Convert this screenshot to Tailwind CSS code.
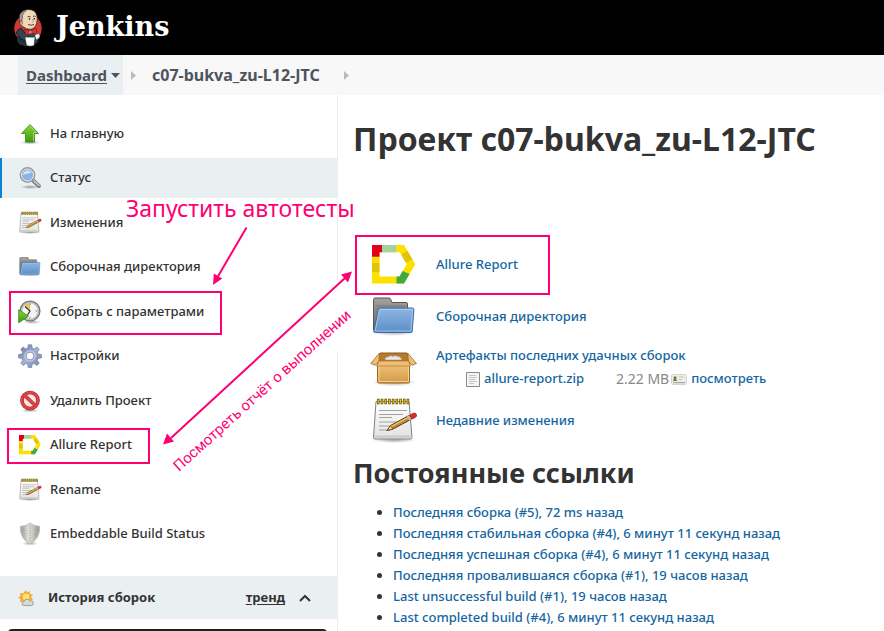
<!DOCTYPE html>
<html lang="ru">
<head>
<meta charset="utf-8">
<title>c07-bukva_zu-L12-JTC [Jenkins]</title>
<script src="https://cdn.jsdelivr.net/npm/@tailwindcss/browser@4"></script>
</head>
<body class="bg-white">
<!-- Shared icon definitions -->
<svg class="absolute size-0" aria-hidden="true">
  <defs>
    <linearGradient id="green" x1="0" y1="0" x2="0" y2="1"><stop offset="0" stop-color="#8fd63a"/><stop offset="1" stop-color="#3d9a0c"/></linearGradient>
    <linearGradient id="blue" x1="0" y1="0" x2="0" y2="1"><stop offset="0" stop-color="#8fb6e2"/><stop offset="1" stop-color="#5b8dc8"/></linearGradient>
    <linearGradient id="grey" x1="0" y1="0" x2="0" y2="1"><stop offset="0" stop-color="#a2a2a0"/><stop offset="1" stop-color="#666"/></linearGradient>
    <linearGradient id="paper" x1="0" y1="0" x2="0" y2="1"><stop offset="0" stop-color="#ffffff"/><stop offset="1" stop-color="#e2e2e0"/></linearGradient>
    <linearGradient id="gearfill" x1="0" y1="0" x2="1" y2="1"><stop offset="0" stop-color="#62779f"/><stop offset=".5" stop-color="#a7b1d3"/><stop offset="1" stop-color="#777fa6"/></linearGradient>
    <linearGradient id="shieldfill" x1="0" y1="0" x2="1" y2="0"><stop offset="0" stop-color="#9b9b96"/><stop offset=".45" stop-color="#e4e4df"/><stop offset="1" stop-color="#95958f"/></linearGradient>
    <linearGradient id="carton" x1="0" y1="0" x2="0" y2="1"><stop offset="0" stop-color="#f1c883"/><stop offset="1" stop-color="#d59a45"/></linearGradient>
    <radialGradient id="shade"><stop offset="0" stop-color="#000" stop-opacity=".35"/><stop offset="1" stop-color="#000" stop-opacity="0"/></radialGradient>
    <symbol id="i-folder" viewBox="0 0 48 48">
      <ellipse cx="24" cy="39" rx="23" ry="4" fill="url(#shade)"/>
      <path d="M3.500 37V6.500q0-1.500 1.500-1.500h14q1.200 0 1.700 1.300l1.300 3.200h14q1.500 0 1.500 1.500V37z" fill="url(#grey)" stroke="#565656"/>
      <path d="M5.500 13h30M5.500 16h30M5.500 19h30" stroke="#777" stroke-width="1"/>
      <path d="M8.500 16.500q.1-1.500 1.500-1.500h32.500q1.500 0 1.400 1.500l-1.700 21.500q-.1 1.500-1.500 1.500H5.200q-1.500 0-1.400-1.500z" fill="url(#blue)" stroke="#3a6ba8"/>
      <path d="M9.500 16.500h33l-1.600 21.500H5.200z" fill="none" stroke="#b4cfee" stroke-width=".8"/>
    </symbol>
    <symbol id="i-notepad" viewBox="0 0 48 48">
      <ellipse cx="24" cy="43" rx="22" ry="3" fill="url(#shade)"/>
      <path d="M6 4.500h33l3 36q0 1.500-1.500 1.500H5Q3.500 42 3.500 40.500z" fill="url(#paper)" stroke="#808080"/>
      <path d="M4.500 39.500h37" stroke="#c8c8c4" stroke-width="2"/>
      <path d="M9 13.500h28M9 17.500h24M9 20.500h13M9 25h28M9 29h20M9 33h11" stroke="#a2a2a2" stroke-width="1.200"/>
      <path d="M7 4.500h33" stroke="#655000" stroke-width="5.600" stroke-dasharray="2.600 1.100"/>
      <path d="M7.700 4.500h33" stroke="#e5c52b" stroke-width="4" stroke-dasharray="1.200 2.500"/>
      <path d="M17 33.500l3.500-5L39 18.500l2.500 3.500L23 32z" fill="#c98b2e" stroke="#5b3c0d"/>
      <path d="M21 29.500l18-9.500" stroke="#f0c878" stroke-width="1.300"/>
      <path d="M17 33.500l3.500-5L23 32z" fill="#ead2a4" stroke="#5b3c0d" stroke-width=".7"/>
      <path d="M37 19.500l2.500-1.400 2.300 4-2.500 1.400z" fill="#bbb"/>
      <path d="M39.500 18.200l4-2q2-.4 2.900 1.200.8 1.800-1 2.900l-3.500 1.900z" fill="#e02c2c" stroke="#9b1111" stroke-width=".7"/>
    </symbol>
    <symbol id="i-allure" viewBox="0 0 48 48">
      <path fill-rule="evenodd" d="M2 4h32l11.300 19.200L34 42.500H2zM9.500 11.300v24.200H29.500l7.300-12.300-7-11.900z" fill="#fde000"/>
      <path d="M2 4h10v7.300H9.500v4.500H2z" fill="#e3001b"/>
      <path d="M12 4h14v7.300H12z" fill="#a4d3a2"/>
      <path d="M2 22h7.500v9H2z" fill="#e0c40c"/>
      <path d="M37.500 10l5 8.500-6.500 3.300-4.800-8z" fill="#e0c40c"/>
      <path d="M26.500 35.500h3l3.200-5.400 6.800 3L34 42.500h-7.500z" fill="#3fab3f"/>
    </symbol>
  </defs>
</svg>

<div class="relative h-screen overflow-hidden bg-white font-['Noto_Sans','Open_Sans',sans-serif] text-[#333]">
  <header class="flex h-[55px] items-center bg-black pl-[13px]">
    <a href="#" class="flex items-center gap-[13px] text-white">
      <svg class="h-[40px] w-[30px]" viewBox="0 0 30 40" aria-hidden="true">
        <ellipse cx="15" cy="20.500" rx="13.700" ry="14" fill="#d33833"/>
        <path d="M4.500 28q-1.500 6 2 8.500l5 1.500h9l5-4-3-9-5-4z" fill="#22323f"/>
        <path d="M3 25q2-4 5-5l4 5 9-1 5 5-2 6-4 1-8-3-4-2z" fill="#2f4552" stroke="#0c1216" stroke-width=".8"/>
        <path d="M7 17V10Q7 2 14.500 1.500 22.500 1 24 8q.5 3-.3 6.500-1 6-6 6.800-4.700.2-7.200-2.500z" fill="#f1d6b9" stroke="#231f20" stroke-width=".7"/>
        <path d="M6.800 14Q4.600 6 10 3l4-1.500Q8.500 6 9.500 9.500L8.800 13z" fill="#a39a8d" stroke="#231f20" stroke-width=".5"/>
        <path d="M7.500 13q2-1 2 1.500t-1.500 3" fill="#e4bd98" stroke="#231f20" stroke-width=".5"/>
        <path d="M14.500 9q1.500-1.300 3 0M20 8.500q1.200-1 2.600 0M15 16.500q3 1.500 6 0" fill="none" stroke="#231f20" stroke-width=".8"/>
        <circle cx="16.500" cy="11" r=".8"/><circle cx="21.300" cy="10.800" r=".8"/>
        <path d="M19.500 11q2 2.500 0 3.500" fill="none" stroke="#a77b58" stroke-width=".8"/>
        <path d="M11 21l6 2.500 6-3.300 1 6-6-1.200-5 2z" fill="#d33833" stroke="#7a1412" stroke-width=".6"/>
        <path d="M16 22.500h2.600v3.200H16z" fill="#ef6a62"/>
        <path d="M12 29h10l-1 8.500q-4 1.500-7.500 0z" fill="#fff" stroke="#222" stroke-width=".5"/>
        <path d="M21.500 27q5-3 5.500.5.500 3-4 4.500z" fill="#eee" stroke="#222" stroke-width=".6"/>
        <path d="M12.500 29.500h9" stroke="#aaa"/>
      </svg>
      <span class="pb-0.5 font-['DejaVu_Serif',serif] text-[27px] leading-8 font-bold">Jenkins</span>
    </a>
  </header>

  <nav aria-label="Breadcrumb" class="flex h-10 items-center bg-[#f8f8f8] pl-[18px] text-[15px] font-bold text-[#4d545d]">
    <a href="#" class="flex h-10 items-center gap-1 bg-[#eaeff2] pr-[3px] pl-2"><span class="underline underline-offset-2">Dashboard</span>
      <svg class="h-[5px] w-[9px]" viewBox="0 0 9 5" aria-hidden="true"><path d="M0 0h9L4.500 5z" fill="#4d545d"/></svg></a>
    <svg class="ml-2 h-[9px] w-[5px]" viewBox="0 0 5 9" aria-hidden="true"><path d="M0 0l5 4.500L0 9z" fill="#bbb"/></svg>
    <a href="#" class="mr-6 ml-4 text-base">c07-bukva_zu-L12-JTC</a>
    <svg class="h-[9px] w-[5px]" viewBox="0 0 5 9" aria-hidden="true"><path d="M0 0l5 4.500L0 9z" fill="#bbb"/></svg>
  </nav>

  <div class="flex">
    <aside class="w-[338px] shrink-0 border-r border-[#eaeff2] pt-[14px]">
      <ul class="text-[13px] font-medium">
        <li class="odd:mt-[5px] even:mt-1"><a href="#" class="flex h-10 items-center gap-2 pl-[18px]">
          <svg class="size-6" viewBox="0 0 24 24" aria-hidden="true"><ellipse cx="12" cy="20.500" rx="10" ry="2" fill="url(#shade)"/><path d="M12 2.500l8.500 9h-4V20h-9v-8.500h-4z" fill="url(#green)" stroke="#3a8a12" stroke-width=".8"/><path d="M12 4l6.300 6.600h-2.800V19" fill="none" stroke="#b6e67e" stroke-width=".7"/></svg>На главную</a></li>
        <li class="odd:mt-[5px] even:mt-1"><a href="#" aria-current="page" class="flex h-10 items-center gap-2 border-l-2 border-[#0b83d3] bg-[#eaeff2] pl-4">
          <svg class="size-6" viewBox="0 0 24 24" aria-hidden="true"><ellipse cx="12" cy="21" rx="10" ry="2" fill="url(#shade)"/><path d="M15 14.500l6 5.500" stroke="#777" stroke-width="3.800" stroke-linecap="round"/><path d="M16 15l5 4.500" stroke="#c4c4c4" stroke-width="1.700" stroke-linecap="round"/><circle cx="9.500" cy="9" r="7" fill="#8ab4e8" stroke="#9a9a9a" stroke-width="1.800"/><circle cx="9.500" cy="9" r="6" fill="none" stroke="#e9eef5"/><path d="M5 9q.5-4 4.500-4.500 3 0 4 2.500-4 0-8.500 2z" fill="#d4e5f9"/></svg>Статус</a></li>
        <li class="odd:mt-[5px] even:mt-1"><a href="#" class="flex h-10 items-center gap-2 pl-[18px]">
          <svg class="size-6" aria-hidden="true"><use href="#i-notepad"/></svg>Изменения</a></li>
        <li class="odd:mt-[5px] even:mt-1"><a href="#" class="flex h-10 items-center gap-2 pl-[18px]">
          <svg class="size-6" aria-hidden="true"><use href="#i-folder"/></svg>Сборочная директория</a></li>
        <li class="odd:mt-[5px] even:mt-1"><a href="#" class="flex h-10 items-center gap-2 pl-[18px]">
          <svg class="size-6" viewBox="0 0 24 24" aria-hidden="true"><ellipse cx="14" cy="22" rx="9" ry="2" fill="url(#shade)"/><circle cx="12" cy="11" r="9.800" fill="#f4f4f1" stroke="#77777d" stroke-width="1.500"/><circle cx="12" cy="11" r="8.400" fill="none" stroke="#b9b9c2" stroke-width="1.500"/><path d="M12 11L6.500 5q2.500-2.300 6-2.200z" fill="#e6c75a"/><path d="M7 6.500l5 4.500-2.500 4" fill="none" stroke="#333" stroke-width="1.200"/><path d="M12 3.500v1.500M19 11h-1.500M12 18.500V17" stroke="#888"/><path d="M.7 9.800l9.800 6.400L.7 22.800z" fill="url(#green)" stroke="#2f8510" stroke-width=".8"/></svg>Собрать с параметрами</a></li>
        <li class="odd:mt-[5px] even:mt-1"><a href="#" class="flex h-10 items-center gap-2 pl-[18px]">
          <svg class="size-6" viewBox="0 0 24 24" aria-hidden="true"><path fill="url(#gearfill)" stroke="#66729a" stroke-width=".6" fill-rule="evenodd" d="M10.300.8h3.400l.5 3.300 2 .8 2.700-2 2.400 2.400-2 2.700.8 2 3.300.5v3.400l-3.300.5-.8 2 2 2.700-2.400 2.400-2.700-2-2 .8-.5 3.300h-3.400l-.5-3.300-2-.8-2.700 2-2.400-2.400 2-2.700-.8-2-3.300-.5v-3.400l3.300-.5.8-2-2-2.700L5.100 2.900l2.700 2 2-.8zM12 8.200a3.800 3.800 0 100 7.600 3.800 3.800 0 000-7.600z"/><circle cx="12" cy="12" r="5.200" fill="none" stroke="#c6cde4" stroke-width="1.200"/></svg>Настройки</a></li>
        <li class="odd:mt-[5px] even:mt-1"><a href="#" class="flex h-10 items-center gap-2 pl-[18px]">
          <svg class="size-6" viewBox="0 0 24 24" aria-hidden="true"><ellipse cx="12" cy="21.500" rx="9" ry="2" fill="url(#shade)"/><circle cx="12" cy="11.500" r="8" fill="#f3e9e9" stroke="#b02020" stroke-width="3.600"/><circle cx="12" cy="11.500" r="8" fill="none" stroke="#dd4444" stroke-width="2.600"/><path d="M6.300 6l11.400 11" stroke="#b02020" stroke-width="3.600"/><path d="M6 5.800l12 11.500" stroke="#dd4444" stroke-width="2.600"/></svg>Удалить Проект</a></li>
        <li class="odd:mt-[5px] even:mt-1"><a href="#" class="flex h-10 items-center gap-2 pl-[18px]">
          <svg class="size-6" aria-hidden="true"><use href="#i-allure"/></svg>Allure Report</a></li>
        <li class="odd:mt-[5px] even:mt-1"><a href="#" class="flex h-10 items-center gap-2 pl-[18px]">
          <svg class="size-6" aria-hidden="true"><use href="#i-notepad"/></svg>Rename</a></li>
        <li class="odd:mt-[5px] even:mt-1"><a href="#" class="flex h-10 items-center gap-2 pl-[18px]">
          <svg class="size-6" viewBox="0 0 24 24" aria-hidden="true"><ellipse cx="12" cy="21.500" rx="8" ry="2" fill="url(#shade)"/><path d="M12 1q4 3.500 9.500 3.300.8 12.500-9.500 17.500Q1.700 16.800 2.500 4.300 8 4.500 12 1z" fill="url(#shieldfill)" stroke="#bbb"/><path d="M12 3v17M5 7.500l2 .5M17 8l2-.5M5.500 12l2-.3M16.500 11.700l2 .3" stroke="#9f9f9a" stroke-dasharray="1.500 1"/></svg>Embeddable Build Status</a></li>
      </ul>

      <section class="mt-[22px]">
        <div class="flex h-[43px] items-center bg-[#eaeff2] pr-[26px] pl-[18px] text-[13px] font-bold">
          <svg class="mr-3.5 size-4" viewBox="0 0 16 16" aria-hidden="true"><path d="M8 0l1 2.500L12 1l-.5 3L15 4.500 13 7l2 2.500-4 1.500L8 14l-2.500-2.500L2 12l.5-3L0 7.500 2.500 6 2 3l3 .5z" fill="#f5a93b"/><circle cx="8" cy="7" r="4" fill="#fbe36a" stroke="#ef9b2c" stroke-width=".7"/><path d="M6 15.500q-2-.2-2-2t2-2q.5-2.300 3-2.300 2 0 2.700 1.600 3.800-.6 3.800 2.400 0 2.300-2 2.300z" fill="#d8d8d4" stroke="#8d8d89" stroke-width=".8"/></svg>
          <h2 class="grow">История сборок</h2>
          <a href="#" class="mr-3.5 underline underline-offset-2">тренд</a>
          <button type="button" aria-label="Свернуть"><svg class="h-[8px] w-[12px]" viewBox="0 0 12 8" aria-hidden="true"><path d="M1 7l5-5 5 5" fill="none" stroke="#333" stroke-width="2"/></svg></button>
        </div>
        <input type="text" aria-label="Поиск" class="mt-[10px] ml-2 block h-9 w-[319px] rounded-sm border-2 border-[#222] px-2 text-[13px]">
      </section>
    </aside>

    <main class="min-w-0 grow pl-[15px]">
      <h1 class="pt-6 text-[32px] leading-10 font-bold">Проект c07-bukva_zu-L12-JTC</h1>
      <div class="mt-[82px] flex flex-col gap-1 text-[13px] font-medium text-[#1566a0]">
        <div class="flex h-12 items-center gap-[18px] pl-[17px]"><svg class="size-12 shrink-0" aria-hidden="true"><use href="#i-allure"/></svg><a href="#">Allure Report</a></div>
        <div class="flex h-12 items-center gap-[18px] pl-[17px]"><svg class="size-12 shrink-0" aria-hidden="true"><use href="#i-folder"/></svg><a href="#">Сборочная директория</a></div>
        <div class="flex h-12 items-center gap-[18px] pl-[17px]">
          <svg class="size-12 shrink-0" viewBox="0 0 48 48" aria-hidden="true"><ellipse cx="24" cy="37" rx="22" ry="4.500" fill="url(#shade)"/><path d="M10 8h27l4 9H6z" fill="#b57a2c" stroke="#8a5a17"/><path d="M15 15q0-3.500 4-3.300 1.500-1.700 4-.3 2.500-1.500 4.500 0 4-.2 4 3.600z" fill="#e9e9e6" stroke="#a9a9a5" stroke-width=".7"/><path d="M7.500 16h32v20.500q0 1.500-1.500 1.500H9q-1.500 0-1.500-1.500z" fill="url(#carton)" stroke="#9b671f"/><path d="M9 18.500h29.500v18H9z" fill="none" stroke="#f8dca8" stroke-width=".8"/><path d="M9.500 8L.8 18.500l4.700 1.700L9 16zM37.500 8l9 10.500-4.700 1.700-3.300-4.200z" fill="#eebf77" stroke="#9b671f" stroke-width=".8"/><path d="M9 16h29.500l2 5h-34z" fill="#edbe74" stroke="#b98236" stroke-width=".8"/></svg>
          <div class="pb-1 leading-[23px]">
            <a href="#">Артефакты последних удачных сборок</a>
            <div class="flex items-center pl-[30px]">
              <svg class="mr-1 h-4 w-3.5" viewBox="0 0 14 16" aria-hidden="true"><path d="M.5 1.500h13v14H.500z" fill="#f5f5f3" stroke="#8a8a8a"/><path d="M3 4.500h7M3 6.500h8M3 8.500h6M3 10.500h8M3 12.500h5" stroke="#c5c5c5"/></svg>
              <a href="#">allure-report.zip</a>
              <span class="ml-8 text-sm leading-[23px] font-normal text-[#888]">2.22 MB</span>
              <svg class="mr-1 ml-0.5 size-4" viewBox="0 0 16 16" aria-hidden="true"><rect x=".5" y="3.500" width="15" height="10" rx="1" fill="#ececea" stroke="#d4d4d0"/><circle cx="4" cy="6.800" r="1.500" fill="#8d6b22"/><path d="M2 10q0-2 2-2t2 2z" fill="#5d7d1a"/><path d="M8 6h5M8 8.500h3" stroke="#c5c5c5"/><path d="M2 11.700h12" stroke="#999"/></svg>
              <a href="#">посмотреть</a>
            </div>
          </div>
        </div>
        <div class="flex h-12 items-center gap-[18px] pl-[17px]"><svg class="size-12 shrink-0" aria-hidden="true"><use href="#i-notepad"/></svg><a href="#">Недавние изменения</a></div>
      </div>
      <h2 class="mt-2 text-[27px] leading-10 font-bold">Постоянные ссылки</h2>
      <ul class="mt-[9px] list-disc pl-10 text-[13px] leading-[21px] font-medium">
        <li><a href="#" class="text-[#1566a0]">Последняя сборка (#5), 72 ms назад</a></li>
        <li><a href="#" class="text-[#1566a0]">Последняя стабильная сборка (#4), 6 минут 11 секунд назад</a></li>
        <li><a href="#" class="text-[#1566a0]">Последняя успешная сборка (#4), 6 минут 11 секунд назад</a></li>
        <li><a href="#" class="text-[#1566a0]">Последняя провалившаяся сборка (#1), 19 часов назад</a></li>
        <li><a href="#" class="text-[#1566a0]">Last unsuccessful build (#1), 19 часов назад</a></li>
        <li><a href="#" class="text-[#1566a0]">Last completed build (#4), 6 минут 11 секунд назад</a></li>
      </ul>
    </main>
  </div>

  <!-- Pink annotations drawn over the page -->
  <svg class="pointer-events-none absolute top-0 left-0 h-[631px] w-[884px]" viewBox="0 0 884 631">
    <path d="M337.500 290v61" stroke="#fff"/>
    <g fill="none" stroke="#ff0073" stroke-width="2">
      <rect x="10" y="292" width="211" height="42"/>
      <rect x="8" y="429" width="141" height="34"/>
      <rect x="356" y="236" width="193" height="58"/>
      <path d="M246.500 227.500L217 278M171 438L345 278"/>
    </g>
    <g fill="#ff0073">
      <path d="M213 285l.8-11.500 8.500 5zM163 444.500l4-11 7 8zM352 271.500l-4 11-7-8z"/>
      <text x="126" y="217" class="font-['Noto_Sans','Open_Sans',sans-serif] text-[23px]">Запустить автотесты</text>
      <text transform="translate(179 472) rotate(-42)" class="font-['Roboto',sans-serif] text-[15px]">Посмотреть отчёт о выполнении</text>
    </g>
  </svg>
</div>
</body>
</html>
